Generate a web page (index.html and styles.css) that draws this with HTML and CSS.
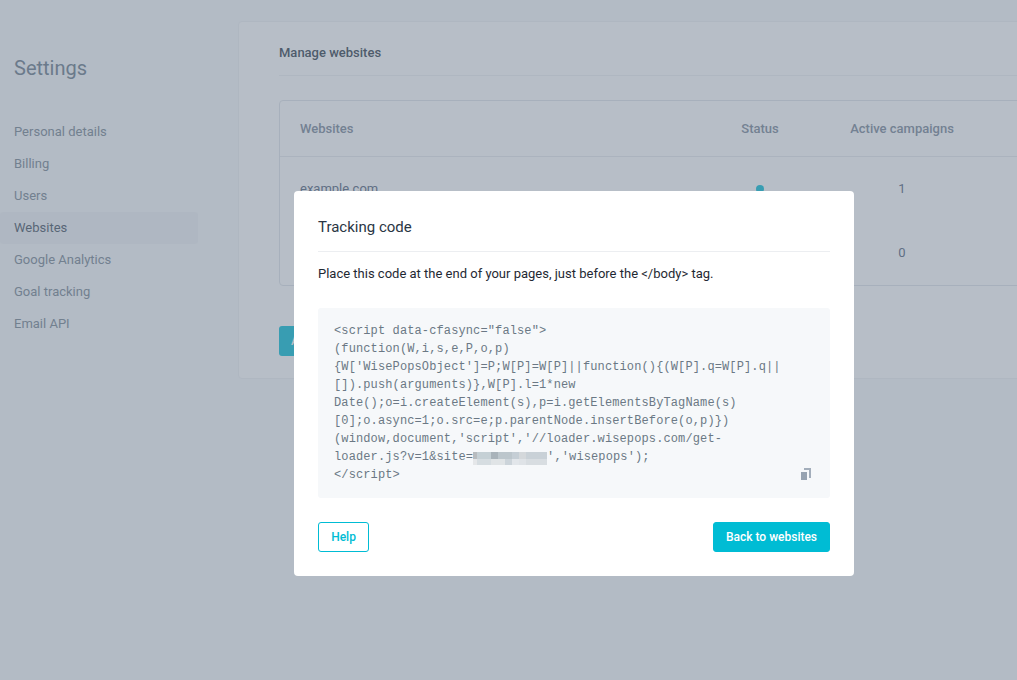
FILE: index.html
```html
<!DOCTYPE html>
<html lang="en">
<head>
<meta charset="utf-8">
<title>Websites settings</title>
<link rel="stylesheet" href="styles.css">
</head>
<body>
<div class="page">
  <aside class="sidebar">
    <h1 class="sidebar-title">Settings</h1>
    <nav class="nav">
      <a class="nav-item">Personal details</a>
      <a class="nav-item">Billing</a>
      <a class="nav-item">Users</a>
      <a class="nav-item nav-item-active">Websites</a>
      <a class="nav-item">Google Analytics</a>
      <a class="nav-item">Goal tracking</a>
      <a class="nav-item">Email API</a>
    </nav>
  </aside>
  <main class="card">
    <h2 class="card-title">Manage websites</h2>
    <div class="table">
      <div class="row row-head">
        <span class="cell-site">Websites</span>
        <span class="cell-status">Status</span>
        <span class="cell-active">Active campaigns</span>
      </div>
      <div class="row">
        <span class="cell-site">example.com</span>
        <span class="cell-status"><i class="dot"></i></span>
        <span class="cell-active">1</span>
      </div>
      <div class="row">
        <span class="cell-site"></span>
        <span class="cell-status"></span>
        <span class="cell-active">0</span>
      </div>
    </div>
    <button class="add-button">A</button>
  </main>
</div>
<div class="overlay">
  <section class="modal">
    <h3 class="modal-title">Tracking code</h3>
    <p class="modal-text">Place this code at the end of your pages, just before the &lt;/body&gt; tag.</p>
    <div class="code-box">
      <pre class="code">&lt;script data-cfasync="false"&gt;
(function(W,i,s,e,P,o,p)
{W['WisePopsObject']=P;W[P]=W[P]||function(){(W[P].q=W[P].q||
[]).push(arguments)},W[P].l=1*new
Date();o=i.createElement(s),p=i.getElementsByTagName(s)
[0];o.async=1;o.src=e;p.parentNode.insertBefore(o,p)})
(window,document,'script','//loader.wisepops.com/get-
loader.js?v=1&amp;site=<span class="redacted"></span>','wisepops');
&lt;/script&gt;</pre>
      <svg class="copy-icon" viewBox="0 0 10 12" width="10" height="12" aria-hidden="true">
        <rect x="0" y="4" width="6" height="8" fill="#97a3b1"/>
        <path d="M3 0H10V10H8V2H3Z" fill="#a3aebb"/>
      </svg>
    </div>
    <div class="modal-footer">
      <button class="btn btn-outline">Help</button>
      <button class="btn btn-solid">Back to websites</button>
    </div>
  </section>
</div>
</body>
</html>
```
FILE: styles.css
```css
* { box-sizing: border-box; }
html, body {
  margin: 0;
  height: 100%;
  overflow: hidden;
  background: #f6f8fa;
  font-family: Roboto, "Liberation Sans", sans-serif;
}
.page {
  display: flex;
  width: 1017px;
  height: 680px;
  overflow: hidden;
  padding-top: 21px;
}
.sidebar { flex: none; width: 238px; }
.sidebar-title {
  margin: 35px 0 0 14px;
  font-size: 20px;
  line-height: 24px;
  font-weight: 400;
  color: #667686;
}
.nav { margin-top: 36px; width: 198px; display: flex; flex-direction: column; }
.nav-item {
  display: block;
  height: 32px;
  line-height: 32px;
  padding-left: 14px;
  font-size: 13px;
  color: #74828f;
  border-radius: 3px;
}
.nav-item-active { background: #eff1f4; color: #3f4d5c; }
.card {
  flex: none;
  width: 830px;
  height: 358px;
  padding: 0 40px;
  background: #fff;
  border: 1px solid #eef0f3;
  border-radius: 4px;
}
.card-title {
  margin: 0;
  height: 54px;
  line-height: 61px;
  font-size: 13px;
  font-weight: 500;
  color: #2c3947;
  border-bottom: 1px solid #eef0f3;
}
.table {
  margin-top: 24px;
  height: 186px;
  border: 1px solid #dfe3e8;
  border-radius: 4px;
}
.row {
  display: flex;
  align-items: center;
  height: 64px;
  padding-bottom: 2px;
  font-size: 13px;
  color: #4f6078;
}
.row-head {
  height: 56px;
  padding-bottom: 0;
  font-weight: 500;
  color: #768494;
  border-bottom: 1px solid #e6e9ed;
}
.cell-site { width: 420px; padding-left: 20px; }
.cell-status { width: 120px; text-align: center; }
.cell-active { width: 164px; text-align: center; }
.dot {
  display: inline-block;
  width: 8px;
  height: 8px;
  border-radius: 50%;
  background: #00bcd4;
}
.add-button {
  display: block;
  margin-top: 40px;
  width: 120px;
  height: 30px;
  padding: 0 0 0 12px;
  text-align: left;
  border: 0;
  border-radius: 3px;
  background: #00bcd4;
  color: #fff;
  font: 500 12px Roboto, sans-serif;
}
.overlay {
  position: fixed;
  inset: 0;
  padding: 191px 0 0 294px;
  background: rgba(112, 126, 144, 0.5);
}
.modal {
  width: 560px;
  height: 385px;
  padding: 24px;
  background: #fff;
  border-radius: 4px;
}
.modal-title {
  margin: 0;
  height: 37px;
  line-height: 24px;
  font-size: 15px;
  font-weight: 400;
  color: #2a3644;
  border-bottom: 1px solid #eceef1;
}
.modal-text {
  margin: 12px 0 0;
  height: 44px;
  line-height: 20px;
  font-size: 13px;
  color: #1f2933;
}
.code-box {
  position: relative;
  height: 190px;
  padding: 14px 16px;
  background: #f6f8fa;
  border-radius: 3px;
}
.code {
  margin: 0;
  font-family: "Liberation Mono", monospace;
  font-size: 12px;
  letter-spacing: 0.12px;
  line-height: 18px;
  color: #6b7885;
  white-space: pre;
}
.redacted {
  display: inline-block;
  width: 74px;
  height: 13px;
  vertical-align: -5px;
  background:
    linear-gradient(90deg, #b8bcbf 0 4px, #c5d0d5 4px 18px, #a9b3ba 18px 25px, #bcc6cc 25px 39px, #c5ced5 39px 46px, #d4d8db 46px 53px, #c9d1d7 53px 74px) 0 0 / 100% 7px no-repeat,
    linear-gradient(90deg, #e5e7e9 0 4px, #d6dde1 4px 18px, #e0e4e6 18px 32px, #ccd4da 32px 39px, #e2e6ea 39px 46px, #dfe3e7 46px 53px, #d8dde1 53px 74px) 0 7px / 100% 6px no-repeat;
}
.copy-icon { position: absolute; right: 19px; bottom: 18px; }
.modal-footer {
  display: flex;
  justify-content: space-between;
  margin-top: 24px;
}
.btn {
  height: 30px;
  border-radius: 3px;
  font: 500 12px Roboto, sans-serif;
  padding: 0;
}
.btn-outline {
  width: 51px;
  background: #fff;
  color: #00bcd4;
  border: 1px solid #00bcd4;
}
.btn-solid {
  width: 117px;
  background: #00bcd4;
  color: #fff;
  border: 1px solid #00bcd4;
}
```
